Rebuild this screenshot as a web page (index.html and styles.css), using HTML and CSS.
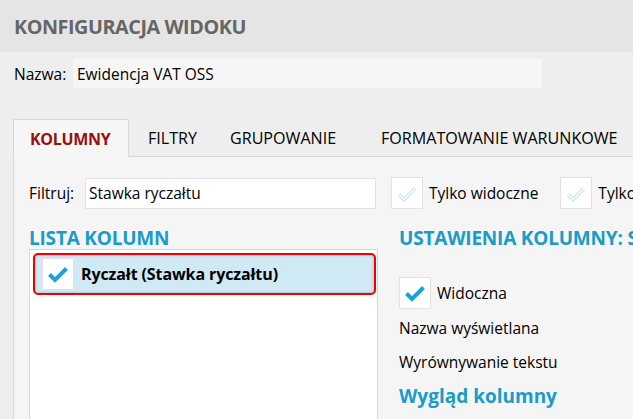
FILE: index.html
```html
<!DOCTYPE html>
<html lang="pl">
<head>
<meta charset="utf-8">
<link rel="stylesheet" href="styles.css">
</head>
<body>
<div class="header"><h1 class="title">KONFIGURACJA WIDOKU</h1></div>
<div class="name-row">
  <span class="label">Nazwa:</span>
  <div class="name-input">Ewidencja VAT OSS</div>
</div>
<div class="tabs">
  <div class="tab tab-active">KOLUMNY</div>
  <div class="tab tab-2">FILTRY</div>
  <div class="tab tab-3">GRUPOWANIE</div>
  <div class="tab tab-4">FORMATOWANIE WARUNKOWE</div>
</div>
<div class="panel">
  <div class="filter-row">
    <span class="label">Filtruj:</span>
    <div class="filter-input">Stawka ryczałtu</div>
    <div class="cb cb-off">
      <svg viewBox="0 0 32 32" width="32" height="32"><path d="M8 17.5 L13 22.5 L24 11.5" fill="none" stroke="#bfe4f2" stroke-width="3.4"/><path d="M8 17.5 L13 22.5 L24 11.5" fill="none" stroke="#fff" stroke-width="1.4"/></svg>
    </div>
    <span class="cb-label">Tylko widoczne</span>
    <div class="cb cb-off cb-second">
      <svg viewBox="0 0 32 32" width="32" height="32"><path d="M8 17.5 L13 22.5 L24 11.5" fill="none" stroke="#bfe4f2" stroke-width="3.4"/><path d="M8 17.5 L13 22.5 L24 11.5" fill="none" stroke="#fff" stroke-width="1.4"/></svg>
    </div>
    <span class="cb-label">Tylko zaznaczone</span>
  </div>
  <div class="columns">
    <div class="left-col">
      <h2 class="section">LISTA KOLUMN</h2>
      <div class="list-box">
        <div class="list-item">
          <div class="cb cb-on">
            <svg viewBox="0 0 32 32" width="32" height="32"><path d="M7.5 16.5 L13 22 L24.5 10.5" fill="none" stroke="#1ba1dc" stroke-width="4"/></svg>
          </div>
          <span class="item-text">Ryczałt (Stawka ryczałtu)</span>
        </div>
      </div>
    </div>
    <div class="right-col">
      <h2 class="section nowrap">USTAWIENIA KOLUMNY: STAWKA</h2>
      <div class="visible-row">
        <div class="cb cb-on">
          <svg viewBox="0 0 32 32" width="32" height="32"><path d="M7.5 16.5 L13 22 L24.5 10.5" fill="none" stroke="#1ba1dc" stroke-width="4"/></svg>
        </div>
        <span class="cb-label">Widoczna</span>
      </div>
      <div class="prop">Nazwa wyświetlana</div>
      <div class="prop">Wyrównywanie tekstu</div>
      <h3 class="subsection">Wygląd kolumny</h3>
    </div>
  </div>
</div>
</body>
</html>
```
FILE: styles.css
```css
* { box-sizing: border-box; }
html, body { margin: 0; padding: 0; }
body {
  width: 633px;
  height: 419px;
  overflow: hidden;
  background: #eeeeee;
  font-family: "Open Sans", "Noto Sans", sans-serif;
  font-size: 15.5px;
  color: #000;
}
.header {
  height: 52px;
  background: #e5e5e5;
  display: flex;
  align-items: center;
  padding-left: 14px;
}
.title {
  margin: 0;
  font-size: 19.8px;
  font-weight: 700;
  color: #666666;
  letter-spacing: -0.45px;
}
.name-row {
  display: flex;
  align-items: center;
  margin-top: 7px;
  padding-left: 14px;
  height: 29px;
}
.label { width: 59px; flex: none; }
.name-input {
  width: 469px;
  height: 29px;
  flex: none;
  background: #f6f6f6;
  display: flex;
  align-items: center;
  padding-left: 4px;
}
.tabs {
  margin-top: 31px;
  margin-left: 13px;
  display: flex;
  height: 38px;
  border-bottom: 1px solid #d8d8d8;
  white-space: nowrap;
}
.tab {
  height: 37px;
  display: flex;
  align-items: center;
  font-size: 16.1px;
  flex: none;
}
.tab-active {
  width: 116px;
  padding-left: 16px;
  background: #f6f6f6;
  border: 1px solid #d8d8d8;
  border-bottom: none;
  height: 38px;
  color: #9a1010;
  font-weight: 700;
  font-size: 16px;
  letter-spacing: -0.3px;
}
.tab-2 { width: 83px; padding-left: 19px; }
.tab-3 { width: 152px; padding-left: 18px; }
.tab-4 { padding-left: 17px; }
.panel {
  margin-left: 13px;
  border-left: 1px solid #d8d8d8;
  background: #f5f5f5;
  height: 262px;
  padding: 20px 0 0 15px;
  overflow: hidden;
}
.filter-row {
  display: flex;
  align-items: center;
  height: 32px;
  white-space: nowrap;
}
.filter-row .label { width: 56px; }
.filter-input {
  width: 291px;
  height: 31px;
  flex: none;
  background: #fff;
  border: 1px solid #e2e2e2;
  display: flex;
  align-items: center;
  padding-left: 3px;
}
.cb {
  width: 32px;
  height: 32px;
  flex: none;
  background: #fff;
  border: 1px solid #e2e2e2;
  display: flex;
  align-items: center;
  justify-content: center;
}
.cb svg { display: block; margin: -1px; }
.filter-row .cb { margin-left: 15px; }
.filter-row .cb-second { margin-left: 22px; }
.cb-label { margin-left: 6px; }
.columns {
  display: flex;
  margin-top: 19px;
}
.left-col { width: 349px; flex: none; }
.right-col { margin-left: 21px; white-space: nowrap; overflow: hidden; }
.section {
  margin: 0;
  height: 21px;
  line-height: 21px;
  font-size: 19px;
  font-weight: 700;
  color: #1a9bc8;
  letter-spacing: -0.2px;
}
.list-box {
  height: 200px;
  background: #fff;
  border: 1px solid #d6d6d6;
  padding: 3px 1px 0 3px;
}
.list-item {
  height: 42px;
  border: 2px solid #f00000;
  border-radius: 5px;
  background: #cfe9f5;
  box-shadow: inset 0 0 3px rgba(0, 0, 0, 0.25);
  display: flex;
  align-items: center;
  padding-left: 7px;
}
.item-text {
  margin-left: 7px;
  font-weight: 700;
  font-size: 16px;
  letter-spacing: -0.1px;
}
.visible-row {
  display: flex;
  align-items: center;
  margin-top: 28px;
}
.prop {
  margin-top: 7px;
  height: 25px;
  line-height: 25px;
}
.prop + .prop { margin-top: 9px; }
.subsection {
  margin: 8px 0 0;
  font-size: 19px;
  font-weight: 700;
  color: #1a9bc8;
}
```
